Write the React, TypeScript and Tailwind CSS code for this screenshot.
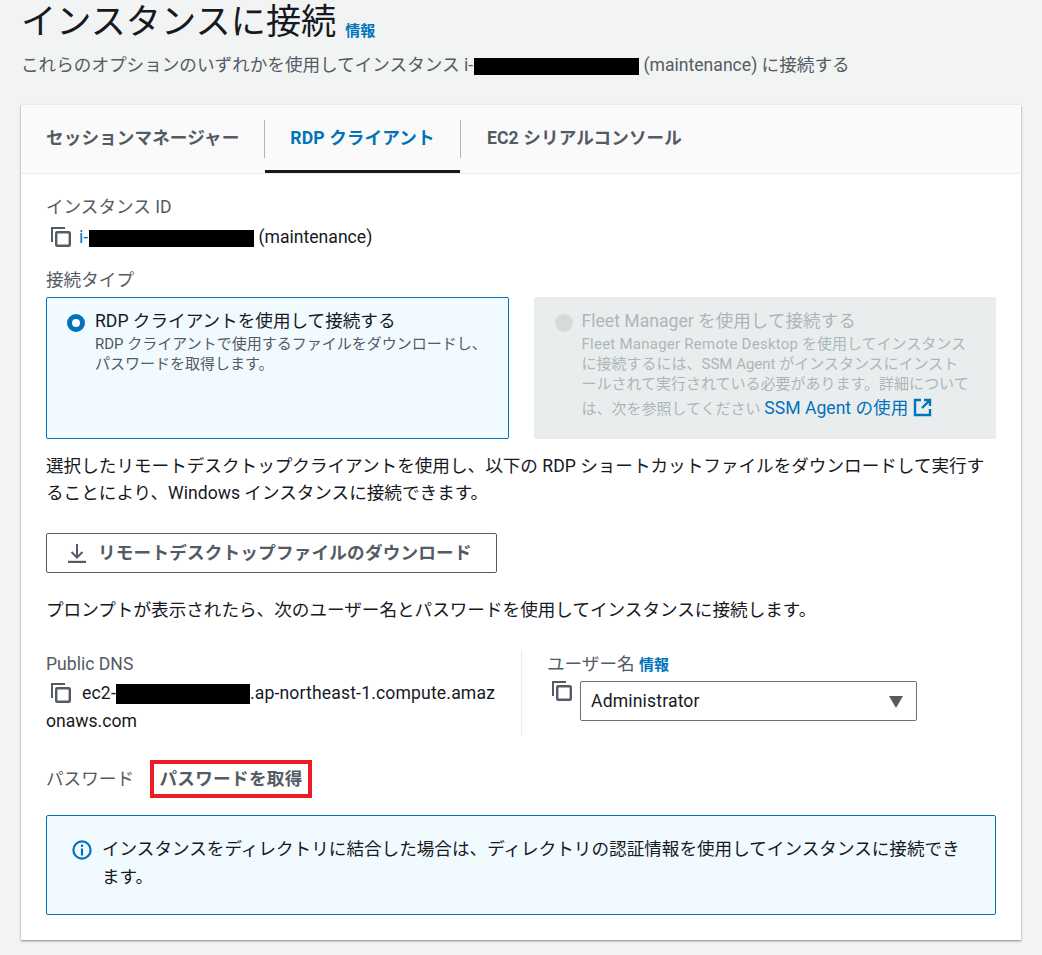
const font = { fontFamily: 'Roboto, "Noto Sans CJK JP", sans-serif' };

const Redact = ({ w, h = "h-[17px]" }: { w: string; h?: string }) => (
  <span className={`inline-block bg-black align-middle ${w} ${h}`} />
);

const CopyIcon = () => (
  <svg width="20" height="20" viewBox="0 0 20 20" fill="none" stroke="#545b64" className="ml-[5px] shrink-0">
    <path d="M1 15V1h13" strokeWidth="2" />
    <rect x="5.2" y="5.2" width="13.6" height="13.6" rx="1" strokeWidth="2.4" />
  </svg>
);

const ExternalIcon = () => (
  <svg width="19" height="19" viewBox="0 0 19 19" fill="none" stroke="#0073bb" strokeWidth="2.4" className="inline-block align-[-3px]">
    <path d="M8 2H2v15h15v-6" />
    <path d="M11 2h6v6M17 2l-8 8" />
  </svg>
);

const InfoIcon = () => (
  <svg width="20" height="20" viewBox="0 0 20 20" fill="none" stroke="#0073bb" strokeWidth="2.2" className="mt-[5px] shrink-0">
    <circle cx="10" cy="10" r="8.6" />
    <path d="M10 8.5v7M10 4.5v2.4" />
  </svg>
);

const DownloadIcon = () => (
  <svg width="20" height="20" viewBox="0 0 20 20" fill="none" stroke="#545b64" strokeWidth="2" className="shrink-0">
    <path d="M10 1v13M4.5 9l5.5 5.5L15.5 9" />
    <path d="M1 19h18" strokeWidth="2.4" />
  </svg>
);

export default function App() {
  return (
    <div style={font} className="h-[955px] w-[1042px] overflow-hidden bg-[#f2f3f3] text-[17.6px] leading-[28px] text-[#16191f]">
      <div className="px-[21px]">
        <div className="flex h-[47px] items-baseline gap-[9px]">
          <h1 className="text-[35.2px] leading-[44px] font-normal">インスタンスに接続</h1>
          <a className="relative top-[2px] text-[15px] font-bold text-[#0073bb]">情報</a>
        </div>
        <p className="mt-[4px] h-[28px] whitespace-nowrap text-[#545b64]">
          これらのオプションのいずれかを使用してインスタンス i-<Redact w="ml-[1px] w-[165px]" /> (maintenance) に接続する
        </p>

        <div className="mt-[26px] h-[835px] w-[1000px] bg-white shadow-[0_1px_2px_rgba(0,28,36,0.5)]">
          <div className="flex h-[69px] border-b border-[#eaeded] bg-[#fafafa] pl-[5px] font-bold tracking-[0.1px]">
            <div className="flex h-full items-center">
              <div className="flex h-[38px] w-[239px] items-center border-r border-[#aab7b8] pb-[2px] pl-[20px] text-[#545b64]">セッションマネージャー</div>
              <div className="flex h-[68px] w-[195px] items-center justify-center border-b-[3px] border-[#16191f] pt-[1px] text-[#0073bb]">RDP クライアント</div>
              <div className="flex h-[38px] items-center border-l border-[#aab7b8] pb-[2px] pl-[26px] text-[#545b64]">EC2 シリアルコンソール</div>
            </div>
          </div>

          <div className="px-[25px] pt-[19px]">
            <div className="text-[#545b64]">インスタンス ID</div>
            <div className="mt-[2px] flex items-center gap-[8px]">
              <CopyIcon />
              <span className="whitespace-nowrap">
                <span className="text-[#0073bb]">i-</span><Redact w="ml-[1px] w-[165px]" /> (maintenance)
              </span>
            </div>

            <div className="mt-[15px] text-[#545b64]">接続タイプ</div>
            <div className="mt-[3px] grid grid-cols-2 gap-[25px]">
              <div className="flex h-[142px] gap-[10px] rounded-[2px] border border-[#0073bb] bg-[#f1faff] pt-[9px] pr-[14px] pl-[20px]">
                <span className="mt-[7px] h-[18px] w-[18px] shrink-0 rounded-full border-[5px] border-[#0073bb] bg-white" />
                <div>
                  <div>RDP クライアントを使用して接続する</div>
                  <div className="-mt-[1px] text-[15px] leading-[20px] text-[#545b64]">RDP クライアントで使用するファイルをダウンロードし、パスワードを取得します。</div>
                </div>
              </div>
              <div className="flex h-[142px] gap-[9px] rounded-[2px] bg-[#eaeded] pt-[10px] pr-[14px] pl-[21px]">
                <span className="mt-[7px] h-[18px] w-[18px] shrink-0 rounded-full bg-[#d5dbdb]" />
                <div className="text-[#aab7b8]">
                  <div>Fleet Manager を使用して接続する</div>
                  <div className="-mt-[1px] text-[15px] leading-[20px] whitespace-nowrap">
                    <span className="tracking-[0.25px]">Fleet Manager Remote Desktop</span> を使用してインスタンス<br />
                    に接続するには、SSM Agent がインスタンスにインスト<br />
                    ールされて実行されている必要があります。詳細について<br />
                    は、次を参照してください <a className="text-[17.6px] leading-[28px] text-[#0073bb]">SSM Agent の使用 <ExternalIcon /></a>
                  </div>
                </div>
              </div>
            </div>

            <p className="mt-[14px] leading-[27px]">
              選択したリモートデスクトップクライアントを使用し、以下の RDP ショートカットファイルをダウンロードして実行することにより、Windows インスタンスに接続できます。
            </p>

            <div className="mt-[26px] flex h-[40px] w-[451px] items-center gap-[11px] rounded-[2px] border border-[#545b64] pl-[20px] font-bold tracking-[0.2px] text-[#545b64]">
              <DownloadIcon />
              リモートデスクトップファイルのダウンロード
            </div>

            <p className="mt-[23px]">プロンプトが表示されたら、次のユーザー名とパスワードを使用してインスタンスに接続します。</p>

            <div className="mt-[26px] flex">
              <div className="h-[85px] w-[476px] border-r border-[#eaeded] pr-[25px]">
                <div className="text-[#545b64]">Public DNS</div>
                <div className="mt-[1px] flex h-[28px] items-center gap-[11px] whitespace-nowrap">
                  <CopyIcon />
                  <span className="tracking-[0.15px]">ec2-<Redact w="w-[134px]" h="h-[20px]" />.ap-northeast-1.compute.amaz</span>
                </div>
                <div>onaws.com</div>
              </div>
              <div className="pl-[25px]">
                <div className="text-[#545b64]">ユーザー名 <a className="text-[15px] font-bold text-[#0073bb]">情報</a></div>
                <div className="mt-[2px] flex gap-[8px]">
                  <CopyIcon />
                  <div className="relative flex h-[40px] w-[337px] items-center rounded-[2px] border border-[#687078] bg-white pb-[1px] pl-[10px] tracking-[0.15px]">
                    Administrator
                    <span className="absolute top-[14px] right-[13px] h-0 w-0 border-x-[7px] border-t-[12px] border-x-transparent border-t-[#545b64]" />
                  </div>
                </div>
              </div>
            </div>

            <div className="mt-[25px] flex h-[38px] items-center">
              <span className="w-[104px] text-[#545b64]">パスワード</span>
              <span className="flex h-[38px] w-[162px] items-center justify-center border-[4px] border-[#ed1c24] font-bold tracking-[0.3px] text-[#545b64]">パスワードを取得</span>
            </div>

            <div className="mt-[17px] flex h-[100px] gap-[10px] rounded-[2px] border border-[#0073bb] bg-[#f1faff] pt-[19px] pr-[30px] pl-[25px]">
              <InfoIcon />
              <p>インスタンスをディレクトリに結合した場合は、ディレクトリの認証情報を使用してインスタンスに接続できます。</p>
            </div>
          </div>
        </div>
      </div>
    </div>
  );
}
